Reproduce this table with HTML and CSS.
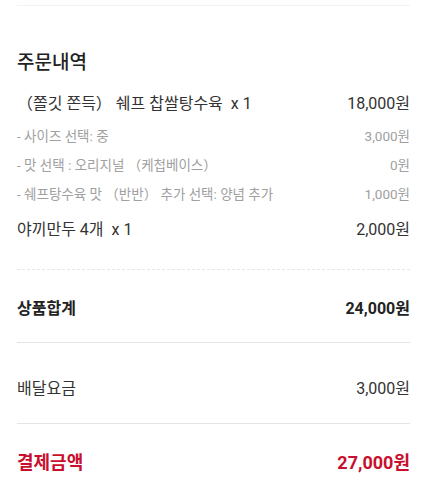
FILE: index.html
```html
<!DOCTYPE html>
<html lang="ko">
<head>
<meta charset="utf-8">
<link rel="stylesheet" href="styles.css">
</head>
<body>
<div class="page">
  <div class="rule rule-top"></div>
  <h2 class="title">주문내역</h2>
  <div class="row item item-first"><span>（쫄깃 쫀득） 쉐프 찹쌀탕수육&nbsp; x 1</span><span>18,000원</span></div>
  <div class="options">
    <div class="row opt"><span>- 사이즈 선택: 중</span><span>3,000원</span></div>
    <div class="row opt"><span>- 맛 선택 : 오리지널 （케첩베이스）</span><span>0원</span></div>
    <div class="row opt"><span>- 쉐프탕수육 맛 （반반） 추가 선택: 양념 추가</span><span>1,000원</span></div>
  </div>
  <div class="row item item-second"><span>야끼만두 4개&nbsp; x 1</span><span>2,000원</span></div>
  <div class="rule rule-dash"></div>
  <div class="row total subtotal"><span>상품합계</span><span>24,000원</span></div>
  <div class="rule"></div>
  <div class="row fee"><span>배달요금</span><span>3,000원</span></div>
  <div class="rule"></div>
  <div class="row pay"><span>결제금액</span><span>27,000원</span></div>
</div>
</body>
</html>
```
FILE: styles.css
```css
html, body {
  margin: 0;
  padding: 0;
  background: #ffffff;
}
body {
  font-family: Roboto, "Noto Sans CJK KR", "Noto Sans", sans-serif;
  color: #333333;
}
.page {
  padding: 5px 14px 0 17px;
  display: flex;
  flex-direction: column;
}
.rule {
  height: 0;
  border-top: 1px solid #e4e4e4;
}
.rule-top {
  border-top-color: #f2f2f2;
}
.rule-dash {
  margin-top: 27px;
  border-top: 1px dashed #e6e6e6;
}
.title {
  margin: 43px 0 0;
  font-size: 19px;
  line-height: 28px;
  font-weight: 500;
  color: #222222;
}
.row {
  display: flex;
  justify-content: space-between;
  align-items: center;
}
.item {
  font-size: 16px;
  line-height: 24px;
  color: #333333;
}
.item-first {
  margin-top: 15px;
}
.options {
  margin-top: 6px;
  display: flex;
  flex-direction: column;
}
.opt {
  font-size: 13.5px;
  line-height: 29px;
  color: #a0a0a0;
}
.item-second {
  margin-top: 9px;
}
.total {
  font-size: 16px;
  line-height: 24px;
  font-weight: 700;
  color: #222222;
}
.subtotal {
  padding: 27px 0 21px;
}
.fee {
  font-size: 16px;
  line-height: 24px;
  color: #333333;
  padding: 34px 0 22px;
}
.pay {
  font-size: 18px;
  line-height: 26px;
  font-weight: 700;
  color: #c8102e;
  padding-top: 26px;
}
```
